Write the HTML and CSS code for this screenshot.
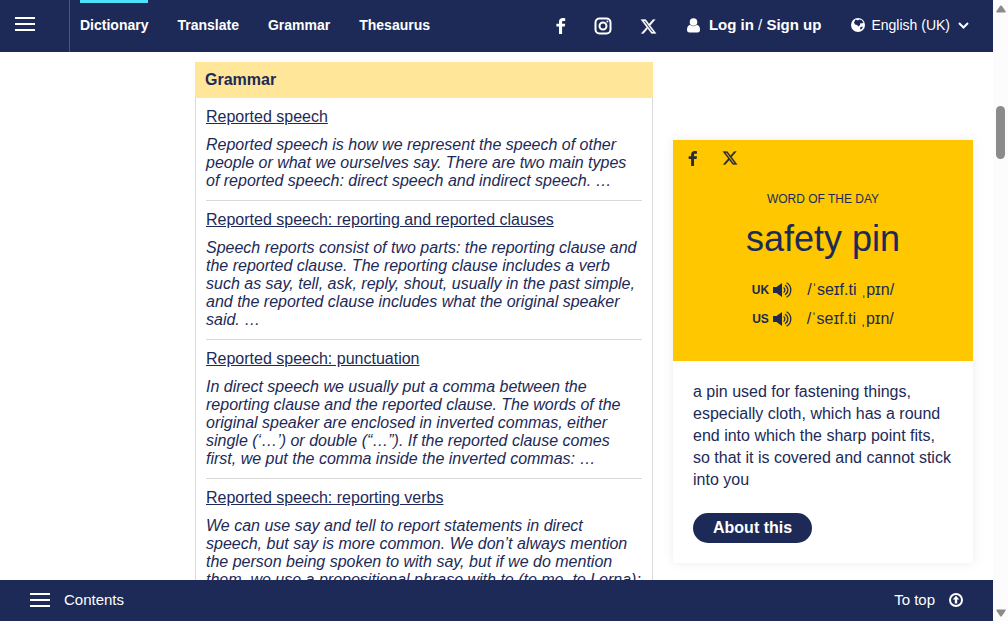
FILE: index.html
```html
<!DOCTYPE html>
<html lang="en-GB">
<head>
<meta charset="utf-8">
<meta name="viewport" content="width=device-width, initial-scale=1">
<title>Reported speech | Dictionary</title>
<link rel="stylesheet" href="styles.css">
</head>
<body>
<svg class="defs" width="0" height="0" aria-hidden="true">
  <symbol id="i-facebook" viewBox="0 0 10 16"><path d="M9.200.3v2.700H7.300C6.300 3 6.100 3.500 6.100 4.200v1.500H9.200L8.800 8.600H6.100V16H3V8.600H.4V5.700H3V3.700C3 1.300 4.500 0 6.700 0 7.700 0 8.900.1 9.200.3z" fill="currentColor"/></symbol>
  <symbol id="i-x" viewBox="0 0 24 24"><path d="M18.244 2.250h3.308l-7.227 8.260 8.502 11.240H16.170l-5.214-6.817L4.990 21.750H1.680l7.730-8.835L1.254 2.250H8.080l4.713 6.231zm-1.161 17.520h1.833L7.084 4.126H5.117z" fill="currentColor" stroke="currentColor" stroke-width=".4"/></symbol>
  <symbol id="i-sound" viewBox="0 0 20 16"><path d="M0 5h3.500L9 1v14L3.500 11H0z" fill="currentColor"/><g fill="none" stroke="currentColor" stroke-width="1.300"><path d="M10.500 5.500a2.900 2.900 0 0 1 0 5"/><path d="M12 3.200a5.500 5.500 0 0 1 0 9.600"/><path d="M13.500.8a8.200 8.200 0 0 1 0 14.400"/></g></symbol>
</svg>
<div class="window">
  <div class="page">
    <header class="topbar">
      <button class="menu" type="button" aria-label="Open menu"><span class="bars"></span></button>
      <nav class="nav">
        <a class="nav-link active" href="#">Dictionary</a>
        <a class="nav-link" href="#">Translate</a>
        <a class="nav-link" href="#">Grammar</a>
        <a class="nav-link" href="#">Thesaurus</a>
      </nav>
      <div class="social">
        <a href="#" aria-label="Facebook"><svg width="10" height="16"><use href="#i-facebook"/></svg></a>
        <a href="#" aria-label="Instagram"><svg width="18" height="18" viewBox="0 0 18 18" fill="none" stroke="currentColor" stroke-width="2"><rect x="1.500" y="1.500" width="15" height="15" rx="4"/><circle cx="9" cy="9" r="3.500"/><circle cx="13.400" cy="4.600" r="1" fill="currentColor" stroke="none"/></svg></a>
        <a href="#" aria-label="X"><svg width="17" height="17"><use href="#i-x"/></svg></a>
      </div>
      <div class="account">
        <svg width="13" height="15" viewBox="0 0 13 15" fill="currentColor"><circle cx="6.500" cy="4" r="3.800"/><path d="M3 6.800C1 7.400 0 9.300 0 12c0 1.500 1 2.500 2.300 2.500h8.400c1.300 0 2.300-1 2.300-2.500 0-2.700-1-4.600-3-5.200-1.900 1.900-5.100 1.900-7 0z"/></svg>
        <span><a href="#">Log in</a> / <a href="#">Sign up</a></span>
      </div>
      <button class="language" type="button">
        <svg width="14" height="14" viewBox="0 0 14 14"><circle cx="7" cy="7" r="7" fill="currentColor"/><path d="M4.500 1.500 7 2.500 8 1.500 10.500 2 12.500 4.500 11 5.500 9.500 5 9 7 7.500 8.500 6 7 4 6.500 3 4.500zM9.500 9 11.500 8.500 11.500 10 10 11.500 9 11z" class="cut"/></svg>
        <span>English (UK)</span>
        <svg width="11" height="7" viewBox="0 0 11 7" fill="none" stroke="currentColor" stroke-width="2"><path d="M1 1l4.500 4.500L10 1"/></svg>
      </button>
    </header>

    <main class="content">
      <section class="grammar">
        <h2 class="grammar-title">Grammar</h2>
        <ul class="entries">
          <li class="entry"><a href="#">Reported speech</a><p>Reported speech is how we represent the speech of other people or what we ourselves say. There are two main types of reported speech: direct speech and indirect speech. …</p></li>
          <li class="entry"><a href="#">Reported speech: reporting and reported clauses</a><p>Speech reports consist of two parts: the reporting clause and the reported clause. The reporting clause includes a verb such as say, tell, ask, reply, shout, usually in the past simple, and the reported clause includes what the original speaker said. …</p></li>
          <li class="entry"><a href="#">Reported speech: punctuation</a><p>In direct speech we usually put a comma between the reporting clause and the reported clause. The words of the original speaker are enclosed in inverted commas, either single (‘…’) or double (“…”). If the reported clause comes first, we put the comma inside the inverted commas: …</p></li>
          <li class="entry"><a href="#">Reported speech: reporting verbs</a><p>We can use say and tell to report statements in direct speech, but say is more common. We don’t always mention the person being spoken to with say, but if we do mention them, we use a prepositional phrase with to (to me, to Lorna): …</p></li>
        </ul>
      </section>

      <aside class="word">
        <div class="word-top">
          <div class="share">
            <a href="#" aria-label="Share on Facebook"><svg width="10" height="15"><use href="#i-facebook"/></svg></a>
            <a href="#" aria-label="Share on X"><svg width="16" height="16"><use href="#i-x"/></svg></a>
          </div>
          <p class="label">WORD OF THE DAY</p>
          <h3 class="headword"><a href="#">safety pin</a></h3>
          <div class="pron"><b>UK</b><button type="button" aria-label="Listen, UK"><svg width="20" height="16"><use href="#i-sound"/></svg></button><span>/ˈseɪf.ti ˌpɪn/</span></div>
          <div class="pron"><b>US</b><button type="button" aria-label="Listen, US"><svg width="20" height="16"><use href="#i-sound"/></svg></button><span>/ˈseɪf.ti ˌpɪn/</span></div>
        </div>
        <div class="word-body">
          <p>a pin used for fastening things, especially cloth, which has a round end into which the sharp point fits, so that it is covered and cannot stick into you</p>
          <a class="about" href="#">About this</a>
        </div>
      </aside>
    </main>

    <footer class="bottombar">
      <button class="contents" type="button"><span class="bars"></span>Contents</button>
      <a class="to-top" href="#">To top
        <svg width="14" height="14" viewBox="0 0 14 14"><circle cx="7" cy="7" r="6" fill="none" stroke="currentColor" stroke-width="2"/><path d="M7 2.800 10.300 6.500H8.200V10.500H5.800V6.500H3.700z" fill="currentColor"/></svg></a>
    </footer>
  </div>
  <div class="scrollbar" aria-hidden="true">
    <svg width="10" height="8" viewBox="0 0 10 8"><path d="M4.200.8Q5 0 5.800.8L9.500 6.200Q9.800 7.500 8.800 7.500H1.200Q.2 7.500.5 6.200z" fill="currentColor"/></svg>
    <span class="thumb"></span>
    <svg width="10" height="8" viewBox="0 0 10 8"><path d="M4.200 7.200Q5 8 5.800 7.200L9.500 1.800Q9.800.5 8.800.5H1.200Q.2.5.5 1.800z" fill="currentColor"/></svg>
  </div>
</div>
</body>
</html>
```

FILE: styles.css
```css
:root {
  --navy: #1d2a57;
  --yellow: #fec700;
}

* { box-sizing: border-box; }

body {
  margin: 0;
  font: 16px/18px "Liberation Sans", Arial, sans-serif;
  color: var(--navy);
  background: #fff;
}

a { color: inherit; text-decoration: none; }
button { border: 0; padding: 0; background: none; color: inherit; font: inherit; cursor: pointer; }
h2, h3, p, ul { margin: 0; padding: 0; }
svg { display: block; flex: none; }
.defs { position: absolute; }

.window { display: grid; grid-template-columns: minmax(0, 1fr) 15px; height: 100vh; }
.page { display: flex; flex-direction: column; min-height: 0; }

/* Top bar */
.topbar {
  display: flex;
  align-items: stretch;
  flex: none;
  height: 52px;
  padding-right: 24px;
  background: var(--navy);
  color: #fff;
  font-size: 14px;
}
.bars {
  display: block;
  width: 20px;
  height: 14px;
  border: solid #fff;
  border-width: 2px 0;
  background: linear-gradient(#fff, #fff) center / 100% 2px no-repeat;
}
.menu { width: 70px; padding: 0 15px 4px; border-right: 1px solid #4a557a; }
.nav { display: flex; gap: 29px; margin-left: 10px; }
.nav-link { padding-top: 13px; border-top: 3px solid transparent; font-weight: bold; }
.nav-link.active { border-top-color: #4fe0fc; }
.social { display: flex; align-items: center; gap: 28px; margin-left: auto; }
.account { display: flex; align-items: center; gap: 9px; margin-left: 30px; padding-bottom: 2px; font-size: 15px; }
.account a { font-weight: bold; }
.language { display: flex; align-items: center; gap: 6px; margin-left: 30px; padding-bottom: 2px; }
.language svg:last-child { margin-left: 2px; }
.cut { fill: var(--navy); }

/* Page columns */
.content {
  display: grid;
  grid-template-columns: 155px minmax(0, 1fr) 300px;
  column-gap: 20px;
  align-items: start;
  flex: 1;
  min-height: 0;
  overflow: hidden;
  padding: 10px 20px 0;
}

.grammar { grid-column: 2; }
.grammar-title { padding: 9px 10px; background: #ffe698; font-size: 16px; line-height: 18px; }
.entries { padding: 0 10px; border: solid #d9d9d9; border-width: 0 1px; list-style: none; }
.entry { padding: 10px 0; border-bottom: 1px solid #d9d9d9; }
.entry a { text-decoration: underline; }
.entry p { margin-top: 10px; font-style: italic; }

/* Word of the day */
.word { margin-top: 78px; box-shadow: 0 0 10px rgba(0, 0, 0, 0.08); }
.word-top { padding: 10px 15px 28px; background: var(--yellow); text-align: center; }
.share { display: flex; align-items: center; gap: 24px; height: 16px; color: #2b2b33; }
.label { margin-top: 24px; font-size: 12px; }
.headword { margin: 10px 0 15px; font-size: 36px; line-height: 42px; font-weight: normal; }
.pron { display: flex; align-items: center; justify-content: center; gap: 4px; height: 29px; }
.pron b { font-size: 12px; }
.pron span { margin-left: 10px; }
.word-body { padding: 20px; }
.word-body p { line-height: 22px; }
.about {
  display: inline-block;
  margin-top: 22px;
  padding: 6px 20px;
  border-radius: 15px;
  background: var(--navy);
  color: #fff;
  font-weight: bold;
}

/* Bottom bar */
.bottombar {
  display: flex;
  align-items: center;
  justify-content: space-between;
  flex: none;
  height: 41px;
  padding: 0 30px 2px;
  background: var(--navy);
  color: #fff;
  font-size: 15px;
}
.contents, .to-top { display: flex; align-items: center; gap: 14px; }

/* Scrollbar */
.scrollbar {
  position: relative;
  display: flex;
  flex-direction: column;
  justify-content: space-between;
  align-items: center;
  padding: 5px 0 4px;
  background: #fcfcfc;
  color: #8b8b8b;
}
.thumb { position: absolute; top: 106px; left: 3px; width: 9px; height: 53px; border-radius: 5px; background: #8b8b8b; }
```
